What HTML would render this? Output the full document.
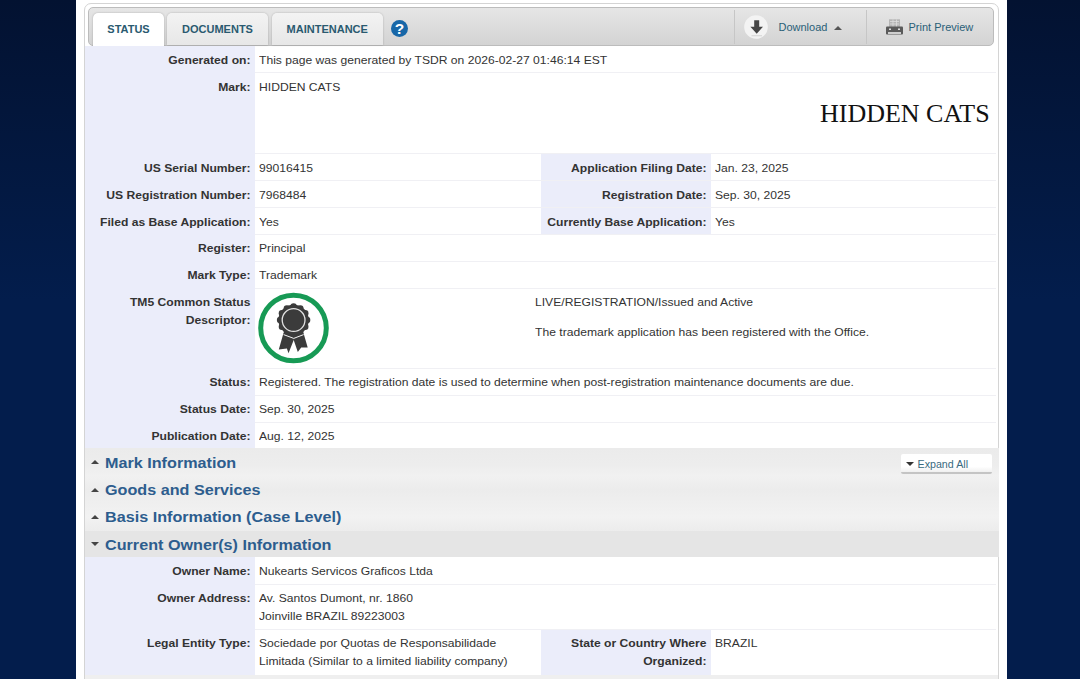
<!DOCTYPE html>
<html><head><meta charset="utf-8"><title>TSDR</title>
<style>
html,body{margin:0;padding:0;}
body{width:1080px;height:679px;overflow:hidden;position:relative;font-family:"Liberation Sans",Arial,sans-serif;font-size:12.13px;color:#333;
background:linear-gradient(to bottom,#031231 0px,#031d4c 300px,#031d4c 679px);}
#panel{position:absolute;left:76px;top:0;width:931px;height:679px;background:#fff;}
#box{position:absolute;left:84px;top:3px;width:915px;height:700px;border:1px solid #d4d4d4;border-radius:7px;box-sizing:border-box;background:#fff;}
#tabbar{position:absolute;left:88px;top:7px;width:906px;height:39px;border:1px solid #bcbcbc;border-radius:5px;box-sizing:border-box;background:linear-gradient(#e6e6e6,#d3d3d3);}
.tab{position:absolute;top:5px;height:32px;box-sizing:border-box;border-radius:5px 5px 0 0;background:linear-gradient(#f3f3f3,#e7e7e7);color:#2a5a70;font-weight:bold;font-size:11px;text-align:center;line-height:33px;box-shadow:0 0 2px rgba(0,0,0,0.25);}
.tab.act{background:#fff;height:34px;}
.lc{position:absolute;background:#ebedfa;}
.sep{position:absolute;height:1px;background:#f0f0f4;left:254.5px;width:741.5px;}
.l{position:absolute;transform:scaleY(0.93);font-weight:bold;text-align:right;white-space:nowrap;}
.v{position:absolute;transform:scaleY(0.93);white-space:nowrap;}
.l1{left:85px;width:165.5px;}
.v1{left:259px;}
.l2{left:541px;width:165.5px;}
.v2{left:715px;}
.sb{position:absolute;left:85px;width:913.7px;}
.st{position:absolute;transform:scaleY(0.93);left:105px;color:#2d5d8e;font-weight:bold;font-size:16.18px;line-height:27px;white-space:nowrap;}
.au{position:absolute;left:91px;width:0;height:0;border-left:4px solid transparent;border-right:4px solid transparent;border-bottom:4.5px solid #444;}
.ad{position:absolute;left:91px;width:0;height:0;border-left:4px solid transparent;border-right:4px solid transparent;border-top:4.5px solid #444;}
</style></head><body>
<div id="panel"></div>
<div id="box"></div>
<div id="tabbar">
 <div class="tab act" style="left:4px;width:71px;">STATUS</div>
 <div class="tab" style="left:78px;width:101px;">DOCUMENTS</div>
 <div class="tab" style="left:183px;width:110.5px;">MAINTENANCE</div>
 <svg style="position:absolute;left:301.5px;top:12px" width="17" height="17" viewBox="0 0 17 17"><circle cx="8.5" cy="8.5" r="8.5" fill="#1767a8"/><text x="8.5" y="14" text-anchor="middle" font-family="Liberation Sans" font-weight="bold" font-size="15.5" fill="#fff">?</text></svg>
 <div style="position:absolute;left:645px;top:2px;width:1px;height:34px;background:#c6c6c6;"></div>
 <div style="position:absolute;left:777px;top:2px;width:1px;height:34px;background:#c6c6c6;"></div>
 <svg style="position:absolute;left:655px;top:7px" width="24" height="24" viewBox="0 0 24 24"><circle cx="12" cy="12" r="11.8" fill="#f3f3f3"/><path d="M10.2 5.3h5v6.5h3.8l-6.3 7-6.3-7h3.8z" fill="#454545"/><rect x="7.5" y="20.4" width="10.5" height="0.8" fill="#ccc"/></svg>
 <div style="position:absolute;left:689.5px;top:12px;color:#2a5f78;font-size:11px;line-height:14px;">Download</div>
 <div style="position:absolute;left:744.7px;top:17.9px;width:0;height:0;border-left:4px solid transparent;border-right:4px solid transparent;border-bottom:4px solid #555;"></div>
 <svg style="position:absolute;left:797px;top:10px" width="18" height="18" viewBox="0 0 18 18"><rect x="3" y="1.3" width="11" height="8.2" fill="#b5b5b5"/><path d="M4 3.5h9M4 6h9M7 1.5v7.5M10.5 1.5v7.5" stroke="#ddd" stroke-width="0.8"/><rect x="0" y="8.5" width="17" height="8" rx="1" fill="#5a5a5a"/><rect x="2" y="14" width="13" height="2" fill="#cfcfcf"/><rect x="3" y="10.5" width="2" height="1.5" fill="#ddd"/><rect x="12" y="10.5" width="2" height="1.5" fill="#ddd"/></svg>
 <div style="position:absolute;left:819.5px;top:12px;color:#2a5f78;font-size:11px;line-height:14px;">Print Preview</div>
</div>

<div class="lc" style="left:85px;top:46px;width:169.5px;height:403px;"></div>
<div class="lc" style="left:541px;top:154px;width:169.5px;height:80.5px;"></div>
<div class="lc" style="left:85px;top:557px;width:169.5px;height:118px;"></div>
<div class="lc" style="left:541px;top:629.5px;width:169.5px;height:45px;"></div>
<div class="sep" style="top:72.2px;"></div>
<div class="sep" style="top:153px;"></div>
<div class="sep" style="top:180px;"></div>
<div class="sep" style="top:207px;"></div>
<div class="sep" style="top:234px;"></div>
<div class="sep" style="top:261px;"></div>
<div class="sep" style="top:288px;"></div>
<div class="sep" style="top:368px;"></div>
<div class="sep" style="top:395px;"></div>
<div class="sep" style="top:422px;"></div>
<div class="sep" style="top:584px;"></div>
<div class="sep" style="top:629px;"></div>
<div class="l l1" style="top:51px;line-height:19px;">Generated on:</div>
<div class="v v1" style="top:51px;line-height:19px;">This page was generated by TSDR on 2026-02-27 01:46:14 EST</div>
<div class="l l1" style="top:78px;line-height:19px;">Mark:</div>
<div class="v v1" style="top:78px;line-height:19px;">HIDDEN CATS</div>
<div class="l l1" style="top:158.5px;line-height:19px;">US Serial Number:</div>
<div class="v v1" style="top:158.5px;line-height:19px;">99016415</div>
<div class="l l2" style="top:158.5px;line-height:19px;">Application Filing Date:</div>
<div class="v v2" style="top:158.5px;line-height:19px;">Jan. 23, 2025</div>
<div class="l l1" style="top:185.5px;line-height:19px;">US Registration Number:</div>
<div class="v v1" style="top:185.5px;line-height:19px;">7968484</div>
<div class="l l2" style="top:185.5px;line-height:19px;">Registration Date:</div>
<div class="v v2" style="top:185.5px;line-height:19px;">Sep. 30, 2025</div>
<div class="l l1" style="top:212.5px;line-height:19px;">Filed as Base Application:</div>
<div class="v v1" style="top:212.5px;line-height:19px;">Yes</div>
<div class="l l2" style="top:212.5px;line-height:19px;">Currently Base Application:</div>
<div class="v v2" style="top:212.5px;line-height:19px;">Yes</div>
<div class="l l1" style="top:239px;line-height:19px;">Register:</div>
<div class="v v1" style="top:239px;line-height:19px;">Principal</div>
<div class="l l1" style="top:266px;line-height:19px;">Mark Type:</div>
<div class="v v1" style="top:266px;line-height:19px;">Trademark</div>
<div class="l l1" style="top:292.5px;line-height:18px;">TM5 Common Status</div>
<div class="l l1" style="top:310.5px;line-height:18px;">Descriptor:</div>
<div class="l l1" style="top:373px;line-height:19px;">Status:</div>
<div class="v v1" style="top:373px;line-height:19px;">Registered. The registration date is used to determine when post-registration maintenance documents are due.</div>
<div class="l l1" style="top:400px;line-height:19px;">Status Date:</div>
<div class="v v1" style="top:400px;line-height:19px;">Sep. 30, 2025</div>
<div class="l l1" style="top:427px;line-height:19px;">Publication Date:</div>
<div class="v v1" style="top:427px;line-height:19px;">Aug. 12, 2025</div>
<div class="l l1" style="top:562px;line-height:19px;">Owner Name:</div>
<div class="v v1" style="top:562px;line-height:19px;">Nukearts Servicos Graficos Ltda</div>
<div class="l l1" style="top:588.7px;line-height:18px;">Owner Address:</div>
<div class="v v1" style="top:588.7px;line-height:18px;">Av. Santos Dumont, nr. 1860</div>
<div class="v v1" style="top:606.7px;line-height:18px;">Joinville BRAZIL 89223003</div>
<div class="l l1" style="top:633.7px;line-height:18px;">Legal Entity Type:</div>
<div class="v v1" style="top:633.7px;line-height:18px;">Sociedade por Quotas de Responsabilidade</div>
<div class="v v1" style="top:651.7px;line-height:18px;">Limitada (Similar to a limited liability company)</div>
<div class="l l2" style="top:633.7px;line-height:18px;">State or Country Where</div>
<div class="l l2" style="top:651.7px;line-height:18px;">Organized:</div>
<div class="v v2" style="top:633.7px;line-height:18px;">BRAZIL</div>
<div style="position:absolute;right:90.3px;top:98px;font-family:'Liberation Serif',serif;font-size:26px;color:#111;line-height:32px;white-space:nowrap;">HIDDEN CATS</div>
<svg style="position:absolute;left:257px;top:290.9px" width="74" height="74" viewBox="0 0 74 74">
  <circle cx="36.5" cy="37" r="32.8" fill="#fff" stroke="#179a55" stroke-width="5"/>
  <g fill="#3b3b3b">
   <polygon points="26.5,42 21.8,58.4 29.9,57.6 31.5,62.2 37.5,47 36.7,42"/>
   <polygon points="46.5,42 50.7,56.4 44.2,56.6 40.8,61 36,47 36.7,42"/>
  </g>
  <g transform="translate(36.6,29.05)" fill="#3b3b3b"><circle r="15.2"/><circle cx="0.00" cy="-13.50" r="3.2"/><circle cx="6.75" cy="-11.69" r="3.2"/><circle cx="11.69" cy="-6.75" r="3.2"/><circle cx="13.50" cy="-0.00" r="3.2"/><circle cx="11.69" cy="6.75" r="3.2"/><circle cx="6.75" cy="11.69" r="3.2"/><circle cx="0.00" cy="13.50" r="3.2"/><circle cx="-6.75" cy="11.69" r="3.2"/><circle cx="-11.69" cy="6.75" r="3.2"/><circle cx="-13.50" cy="0.00" r="3.2"/><circle cx="-11.69" cy="-6.75" r="3.2"/><circle cx="-6.75" cy="-11.69" r="3.2"/></g>
  <polyline points="26.6,43.6 36.75,47.4 46.6,43.6" fill="none" stroke="#f4f4f4" stroke-width="1"/>
  <circle cx="36.6" cy="29.05" r="11.4" fill="none" stroke="#e2e2e2" stroke-width="1.3"/>
</svg>
<div class="v" style="left:535px;top:293px;line-height:19px;">LIVE/REGISTRATION/Issued and Active</div>
<div class="v" style="left:535px;top:323px;line-height:19px;">The trademark application has been registered with the Office.</div>

<div class="sb" style="top:448.4px;height:27.6px;background:linear-gradient(#ebebeb,#ededed 60%,#f1f1f1);"></div>
<div class="sb" style="top:476px;height:27px;background:linear-gradient(#f1f1f1,#ececec 50%,#efefef);"></div>
<div class="sb" style="top:503px;height:28px;background:linear-gradient(#efefef,#f2f2f2 50%,#ececec);"></div>
<div class="sb" style="top:530.5px;height:26.5px;background:#e5e5e5;"></div>
<div class="au" style="top:460.2px;"></div><div class="st" style="top:449px;">Mark Information</div>
<div class="au" style="top:488px;"></div><div class="st" style="top:476px;">Goods and Services</div>
<div class="au" style="top:514.8px;"></div><div class="st" style="top:503px;">Basis Information (Case Level)</div>
<div class="ad" style="top:542.3px;"></div><div class="st" style="top:531px;">Current Owner(s) Information</div>
<div style="position:absolute;left:901px;top:453.5px;width:91px;height:20.5px;background:linear-gradient(#fff 70%,#f0f0f0);border-bottom:2.5px solid #c4c4c4;border-radius:2px;box-sizing:border-box;font-size:10.7px;color:#3a6a80;line-height:19px;"><span style="position:absolute;left:5px;top:8.3px;width:0;height:0;border-left:4px solid transparent;border-right:4px solid transparent;border-top:4.5px solid #333;"></span><span style="position:absolute;left:16.5px;top:1.5px;">Expand All</span></div>
<div style="position:absolute;left:85px;top:674.5px;width:913px;height:10px;background:#efefef;"></div>
</body></html>
